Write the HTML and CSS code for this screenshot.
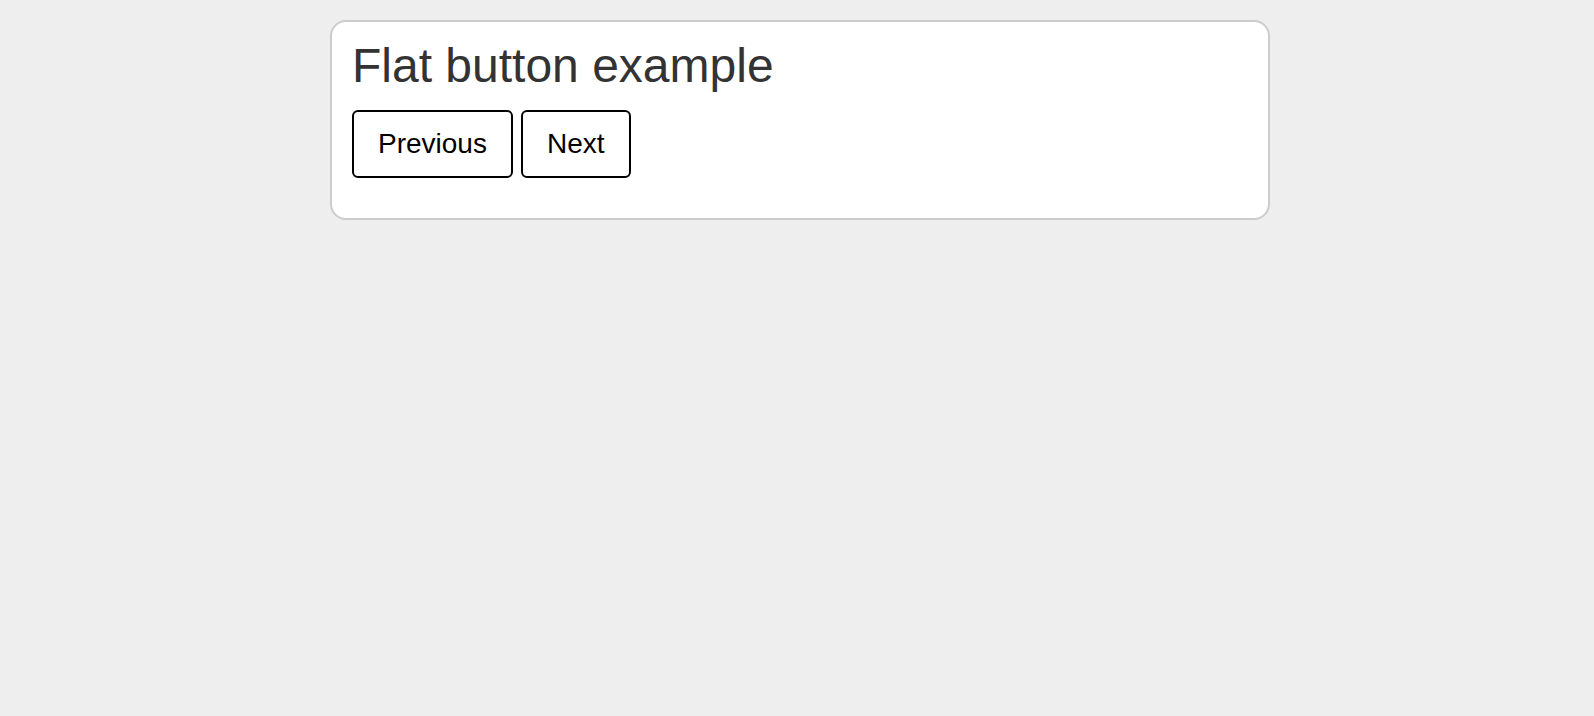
FILE: index.html
```html
<!DOCTYPE html>
<html>
<head>
<meta charset="utf-8">
<title>Flat button example</title>
<link rel="stylesheet" href="styles.css">
</head>
<body>
<div class="page">
  <section class="card">
    <h1 class="title">Flat button example</h1>
    <div class="actions">
      <button class="flat-btn">Previous</button>
      <button class="flat-btn">Next</button>
    </div>
  </section>
</div>
</body>
</html>
```

FILE: styles.css
```css
html, body {
  margin: 0;
  padding: 0;
  background: #eeeeee;
  font-family: "Liberation Sans", Arial, sans-serif;
}

.page {
  padding: 20px 0 0 6px;
}

.card {
  box-sizing: border-box;
  width: 940px;
  margin: 0 auto;
  background: #ffffff;
  border: 2px solid #cccccc;
  border-radius: 16px;
  padding: 16px 20px 40px;
}

.title {
  margin: 0;
  font-size: 48px;
  font-weight: normal;
  line-height: normal;
  color: #333333;
}

.actions {
  display: flex;
  gap: 8px;
  margin-top: 17px;
}

.flat-btn {
  font-family: "Liberation Sans", Arial, sans-serif;
  font-size: 28px;
  line-height: normal;
  color: #000000;
  background: #ffffff;
  border: 2px solid #000000;
  border-radius: 6px;
  padding: 16px 24px;
  margin: 0;
}
```
